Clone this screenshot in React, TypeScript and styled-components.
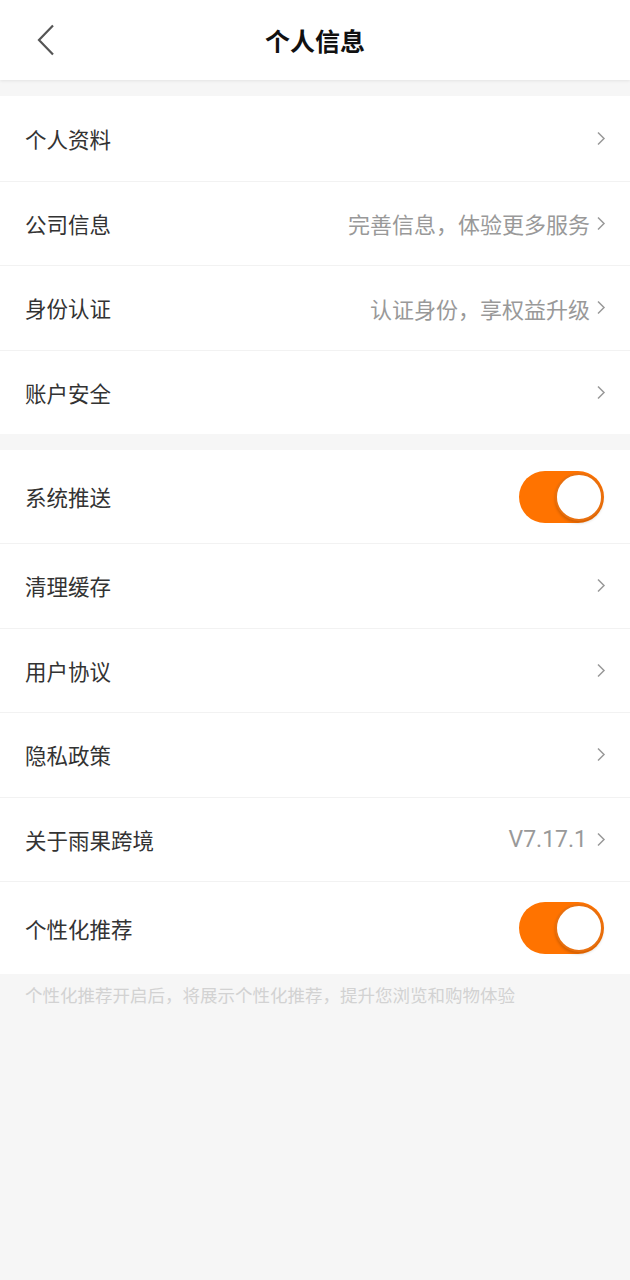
import { useState } from 'react'
import styled, { createGlobalStyle } from 'styled-components'

const GlobalStyle = createGlobalStyle`
  html, body {
    margin: 0;
    padding: 0;
    background: #f6f6f6;
  }
  body {
    font-family: 'Noto Sans CJK SC', 'Noto Sans', sans-serif;
  }
`

const Page = styled.div`
  width: 630px;
  min-height: 1280px;
  background: #f6f6f6;
`

const Header = styled.header`
  position: relative;
  height: 80px;
  background: #fff;
  display: flex;
  align-items: center;
  justify-content: center;
  box-shadow: 0 1px 3px rgba(0, 0, 0, 0.08);
`

const BackButton = styled.button`
  position: absolute;
  left: 30px;
  top: 20px;
  width: 32px;
  height: 40px;
  border: none;
  background: none;
  padding: 0;
  display: flex;
  align-items: center;
  justify-content: center;
`

const Title = styled.h1`
  margin: 0;
  font-size: 25px;
  font-weight: 700;
  color: #111;
`

const Group = styled.section`
  margin-top: 16px;
  background: #fff;
`

const Row = styled.div<{ $tall?: boolean }>`
  box-sizing: border-box;
  height: ${(p) => (p.$tall ? 93 : 84.5)}px;
  padding: 0 24px 0 25px;
  display: flex;
  align-items: center;
  justify-content: space-between;
  border-top: 1px solid #f2f2f2;
  &:first-child {
    border-top: none;
  }
`

const Label = styled.span`
  font-size: 21.5px;
  color: #333;
`

const Right = styled.div`
  display: flex;
  align-items: center;
  gap: 6px;
`

const Hint = styled.span`
  font-size: 22px;
  color: #999;
`

const Version = styled(Hint)`
  font-family: Roboto, 'Noto Sans', sans-serif;
  font-size: 23px;
  margin-right: 3px;
`

const Toggle = styled.button<{ $on: boolean }>`
  position: relative;
  width: 85px;
  height: 52px;
  margin-right: 2px;
  border-radius: 26px;
  border: none;
  padding: 0;
  background: ${(p) => (p.$on ? '#ff7300' : '#e5e5e5')};
  cursor: pointer;
`

const Knob = styled.span<{ $on: boolean }>`
  position: absolute;
  top: 2px;
  left: ${(p) => (p.$on ? 36 : 2)}px;
  width: 44px;
  height: 44px;
  border-radius: 50%;
  background: #fff;
  border: 2px solid ${(p) => (p.$on ? '#e8700f' : '#ddd')};
  box-shadow: 0 2px 3px rgba(0, 0, 0, 0.18);
`

const Note = styled.p`
  margin: 0;
  padding: 8px 25px;
  font-size: 17.5px;
  color: #d2d2d2;
`

function Chevron() {
  return (
    <svg width='10' height='15' viewBox='0 0 10 15' fill='none'>
      <path d='M2 1.5 L8 7.5 L2 13.5' stroke='#999' strokeWidth='1.5' />
    </svg>
  )
}

function LinkRow({ label, hint, version }: { label: string; hint?: string; version?: string }) {
  return (
    <Row>
      <Label>{label}</Label>
      <Right>
        {hint && <Hint>{hint}</Hint>}
        {version && <Version>{version}</Version>}
        <Chevron />
      </Right>
    </Row>
  )
}

function SwitchRow({ label }: { label: string }) {
  const [on, setOn] = useState(true)
  return (
    <Row $tall>
      <Label>{label}</Label>
      <Toggle $on={on} onClick={() => setOn(!on)}>
        <Knob $on={on} />
      </Toggle>
    </Row>
  )
}

export default function App() {
  return (
    <Page>
      <GlobalStyle />
      <Header>
        <BackButton>
          <svg width='20' height='32' viewBox='0 0 20 32' fill='none'>
            <path d='M17 1.5 L3 16 L17 30.5' stroke='#555' strokeWidth='2.2' />
          </svg>
        </BackButton>
        <Title>个人信息</Title>
      </Header>

      <Group>
        <LinkRow label='个人资料' />
        <LinkRow label='公司信息' hint='完善信息，体验更多服务' />
        <LinkRow label='身份认证' hint='认证身份，享权益升级' />
        <LinkRow label='账户安全' />
      </Group>

      <Group>
        <SwitchRow label='系统推送' />
        <LinkRow label='清理缓存' />
        <LinkRow label='用户协议' />
        <LinkRow label='隐私政策' />
        <LinkRow label='关于雨果跨境' version='V7.17.1' />
        <SwitchRow label='个性化推荐' />
      </Group>
      <Note>个性化推荐开启后，将展示个性化推荐，提升您浏览和购物体验</Note>
    </Page>
  )
}
